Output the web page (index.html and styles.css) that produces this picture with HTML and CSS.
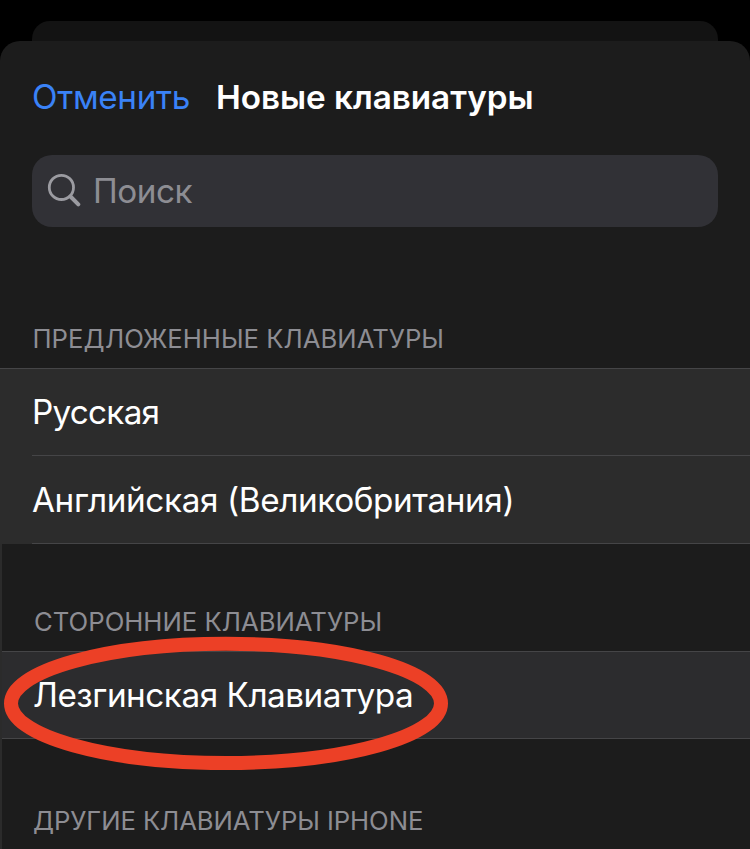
FILE: index.html
```html
<!DOCTYPE html>
<html lang="ru"><head><meta charset="utf-8"><title>Новые клавиатуры</title><link rel="stylesheet" href="styles.css"></head>
<body>
<div class="behind"></div>
<main class="sheet">
<header class="nav"><a class="cancel"><span>Отменить</span></a><h1>Новые клавиатуры</h1></header>
<div class="search"><svg class="glass" width="34" height="36" viewBox="0 0 34 36"><circle cx="14.4" cy="14.4" r="12.1"/><path d="M23.5 23.5 31.3 31.3"/></svg><span class="placeholder">Поиск</span></div>
<h2 class="suggested">ПРЕДЛОЖЕННЫЕ КЛАВИАТУРЫ</h2>
<ul class="list"><li><span class="r1">Русская</span></li><li><span class="r2">Английская (Великобритания)</span></li></ul>
<section class="more">
<h2 class="third">СТОРОННИЕ КЛАВИАТУРЫ</h2>
<div class="row"><span class="r3">Лезгинская Клавиатура</span>
<svg class="ring" width="446" height="136" viewBox="0 0 446 136"><ellipse cx="223" cy="67.4" rx="215" ry="59.6"/></svg></div>
<h2 class="other">ДРУГИЕ КЛАВИАТУРЫ IPHONE</h2>
</section>
</main>
</body></html>
```
FILE: styles.css
```css
* { box-sizing: border-box; }
body { margin: 0; height: 849px; overflow: hidden; background: #000; padding-top: 21px; color: #fff; font-family: Inter, sans-serif; }
.behind { height: 20px; margin: 0 32px; border-radius: 18px 18px 0 0; background: #131313; }
.sheet { height: 808px; background: #1c1c1c; border-radius: 20px 20px 0 0; overflow: hidden; }
.nav { height: 114px; padding: 0 0 2px 32px; display: flex; align-items: center; gap: 27px; font-size: 33.3px; line-height: 40px; white-space: nowrap; }
.cancel { color: #3a82f7; width: 157px; letter-spacing: -0.3px; }
h1, h2, ul { margin: 0; padding: 0; }
h1 { font-size: 33.3px; font-weight: 600; letter-spacing: -0.05px; }
.search { height: 72px; margin: 0 32px; border-radius: 20px; background: #313136; display: flex; align-items: center; padding-left: 15px; }
.glass { fill: none; stroke: #9b9ba1; stroke-width: 2.8; stroke-linecap: round; }
.glass path { stroke-width: 4; }
.placeholder { font-size: 33.3px; line-height: 40px; color: #8d8d93; margin-left: 12px; letter-spacing: -0.5px; }
h2 { font-size: 25.7px; font-weight: 400; color: #8d8d93; white-space: nowrap; line-height: 32px; }
.suggested { height: 141px; padding: 96px 0 0 32.5px; }
.list { list-style: none; border-top: 1px solid #454547; background: #2c2c2c; }
li { height: 87px; padding-bottom: 1px; margin-left: 32px; border-bottom: 1px solid #454547; font-size: 33.3px; line-height: 40px; display: flex; align-items: center; }
li + li { height: 88px; padding: 1px 0 0; }
li span, .row span { white-space: nowrap; letter-spacing: -0.39px; }
li .r1 { letter-spacing: -0.75px; }
.row .r3 { letter-spacing: -0.48px; }
.more { border-left: 2px solid #2b2b2b; height: 306px; }
.third { height: 107px; padding: 62px 0 0 32px; }
.row { position: relative; height: 88px; border: solid #454547; border-width: 1px 0; background: #2c2c2e; padding-left: 31px; font-size: 33.3px; line-height: 40px; display: flex; align-items: center; }
.ring { position: absolute; left: 1px; top: -16px; fill: none; stroke: #ec4026; stroke-width: 14; }
.other { padding: 66px 0 0 31px; letter-spacing: -0.08px; }
```
